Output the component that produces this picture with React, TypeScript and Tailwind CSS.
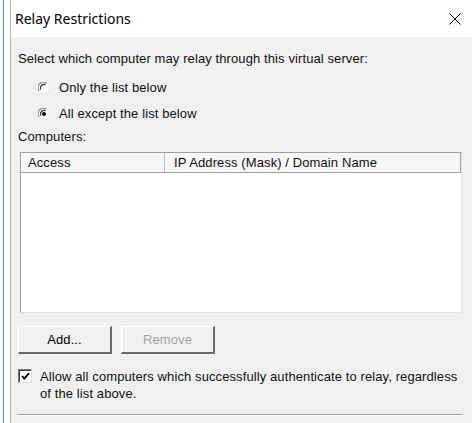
import React from 'react';

const ui = { fontFamily: '"Liberation Sans", Arial, sans-serif' };

function Radio({ checked }: { checked?: boolean }) {
  return (
    <svg width="12" height="12" viewBox="0 0 12 12" className="shrink-0">
      <circle cx="6" cy="6" r="5.3" fill="#ffffff" />
      <path d="M1.3 8.6 A5.2 5.2 0 0 1 8.6 1.3" fill="none" stroke="#9a9a9a" strokeWidth="1.4" />
      <path d="M2.6 7.6 A3.9 3.9 0 0 1 7.6 2.6" fill="none" stroke="#2f2f2f" strokeWidth="1.2" />
      <path d="M10.7 3.4 A5.2 5.2 0 0 1 3.4 10.7" fill="none" stroke="#e4e4e4" strokeWidth="1.2" />
      {checked && <circle cx="6" cy="6" r="2" fill="#000000" />}
    </svg>
  );
}

function Checkbox() {
  return (
    <div className="w-[14px] h-[14px] shrink-0 bg-white border border-[#7a7a7a] border-r-[#dcdcdc] border-b-[#dcdcdc] shadow-[inset_1px_1px_0_#3c3c3c] flex items-center justify-center">
      <svg width="9" height="9" viewBox="0 0 9 9">
        <path d="M1 4 L3.3 6.6 L8 1.2" fill="none" stroke="#000" strokeWidth="1.8" />
      </svg>
    </div>
  );
}

function Button({ label, disabled }: { label: string; disabled?: boolean }) {
  return (
    <div
      className={
        'w-[94px] h-[28px] flex items-center justify-center bg-[#f0f0f0] border-t border-l border-white border-r-2 border-b-2 border-r-[#6a6a6a] border-b-[#6a6a6a] text-[13px] ' +
        (disabled ? 'text-[#a3a3a3]' : 'text-black')
      }
    >
      {label}
    </div>
  );
}

export default function App() {
  return (
    <div className="w-[472px] h-[423px] flex overflow-hidden bg-white" style={ui}>
      {/* window behind */}
      <div className="w-[10px] h-full bg-white flex shrink-0">
        <div className="w-[3px]" />
        <div className="w-px h-full bg-[#4a86c0]" />
      </div>

      <div className="flex-1 flex flex-col border-l border-[#b4b4b4]">
        {/* title bar */}
        <div className="h-[37px] bg-white flex items-center justify-between pl-[4px] pr-[11px] shrink-0">
          <span className="text-[14px] text-black" style={{ fontFamily: '"Noto Sans", "Liberation Sans", sans-serif' }}>
            Relay Restrictions
          </span>
          <svg width="12" height="12" viewBox="0 0 12 12">
            <path d="M0.5 0.5 L11.5 11.5 M11.5 0.5 L0.5 11.5" stroke="#000" strokeWidth="1" />
          </svg>
        </div>

        {/* body */}
        <div className="flex-1 bg-[#f0f0f0] pl-[7px] pr-[10px] flex flex-col text-[13px] tracking-[0.1px] text-[#111]">
          <div className="mt-[14px] leading-[16px]">Select which computer may relay through this virtual server:</div>

          <div className="mt-[13px] ml-[20px] flex items-center gap-[9px] leading-[16px]">
            <Radio />
            <span>Only the list below</span>
          </div>
          <div className="mt-[10px] ml-[20px] flex items-center gap-[9px] leading-[16px]">
            <Radio checked />
            <span>All except the list below</span>
          </div>

          <div className="mt-[7px] leading-[16px]">Computers:</div>

          <div className="mt-[7px] ml-[2px] h-[161px] bg-white border-t border-l border-[#a0a0a0] border-r border-b border-r-[#e3e3e3] border-b-[#e3e3e3] flex flex-col">
            <div className="h-[20px] flex border-b border-[#a0a0a0] bg-[#f7f7f7] text-[#111]">
              <div className="w-[144px] pl-[7px] flex items-center border-r border-[#bdbdbd]">Access</div>
              <div className="flex-1 pl-[9px] flex items-center border-r border-[#a0a0a0]">
                IP Address (Mask) / Domain Name
              </div>
            </div>
            <div className="flex-1" />
          </div>

          <div className="mt-[13px] flex gap-[9px]">
            <Button label="Add..." />
            <Button label="Remove" disabled />
          </div>

          <div className="mt-[14px] flex items-start gap-[8px]">
            <div className="pt-[1px]">
              <Checkbox />
            </div>
            <div className="leading-[17px]">
              Allow all computers which successfully authenticate to relay, regardless
              <br />
              of the list above.
            </div>
          </div>

          <div className="mt-[12px] h-[2px] border-t border-[#a0a0a0] border-b border-b-white" />
        </div>
      </div>
    </div>
  );
}
